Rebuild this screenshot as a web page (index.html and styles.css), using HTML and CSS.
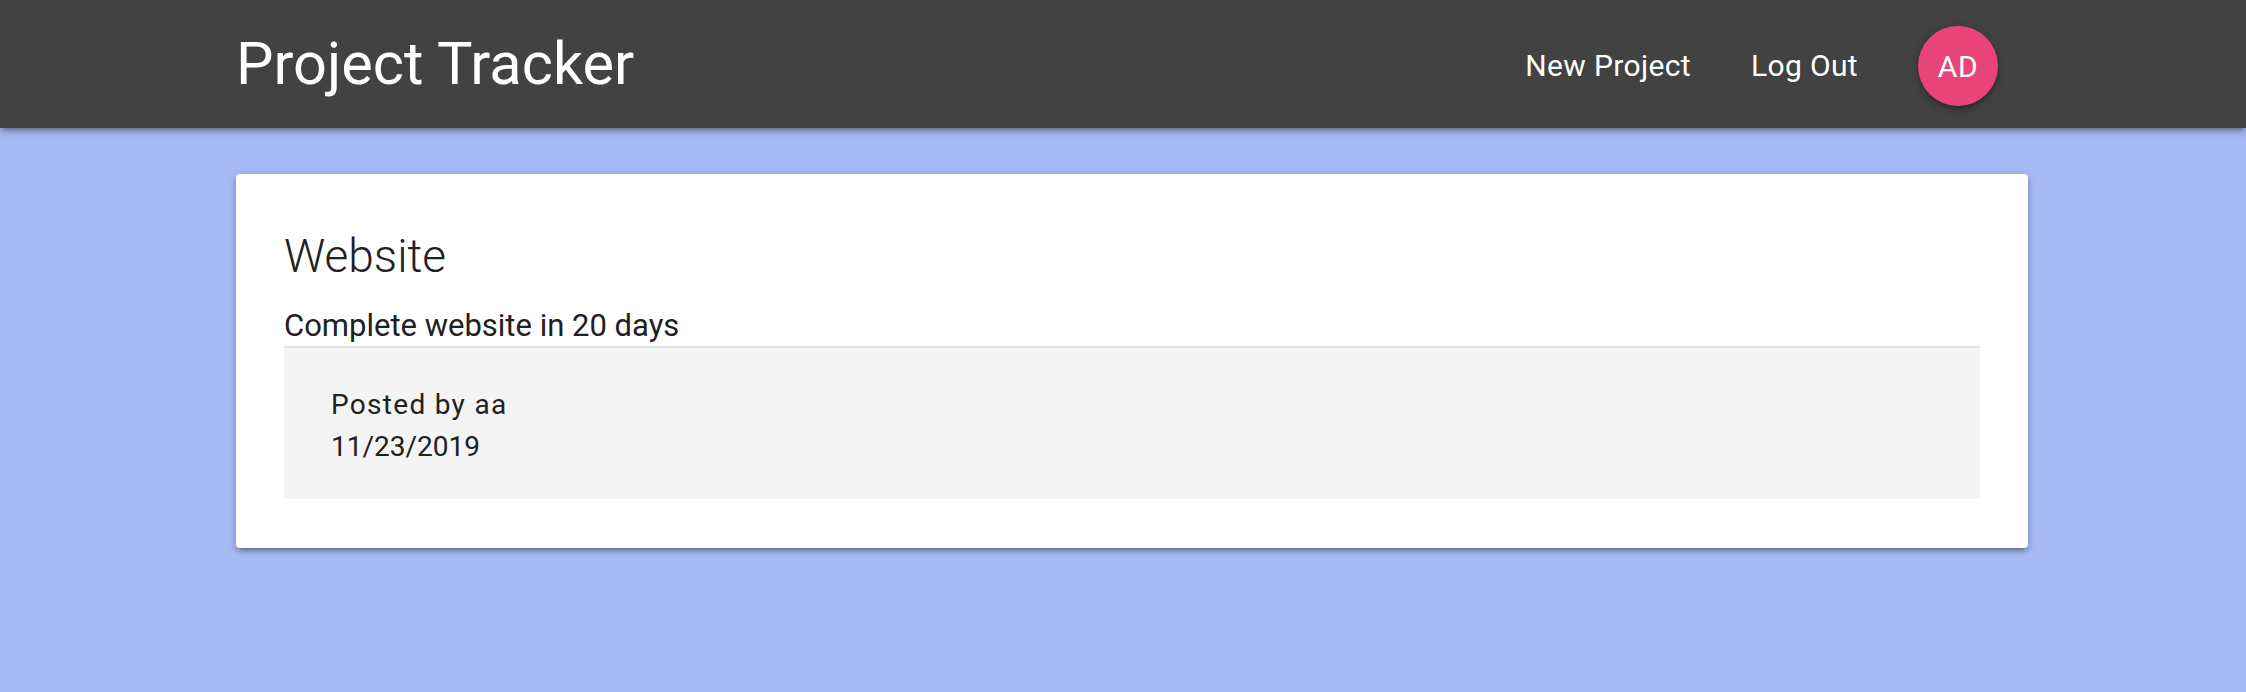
FILE: index.html
```html
<!DOCTYPE html>
<html lang="en">
<head>
<meta charset="utf-8">
<title>Project Tracker</title>
<link rel="stylesheet" href="styles.css">
</head>
<body>
<nav class="navbar">
  <div class="nav-inner">
    <a class="brand" href="#">Project Tracker</a>
    <ul class="nav-links">
      <li><a class="nav-link" href="#">New Project</a></li>
      <li><a class="nav-link" href="#">Log Out</a></li>
      <li><a class="nav-link avatar-link" href="#"><span class="avatar">AD</span></a></li>
    </ul>
  </div>
</nav>
<main class="page">
  <div class="card">
    <span class="card-title">Website</span>
    <p class="card-text">Complete website in 20 days</p>
    <div class="card-action">
      <div class="meta meta-author">Posted by aa</div>
      <div class="meta">11/23/2019</div>
    </div>
  </div>
</main>
</body>
</html>
```
FILE: styles.css
```css
html, body {
  margin: 0;
  padding: 0;
}
body {
  background: #a6baf5;
  font-family: Roboto, "Liberation Sans", sans-serif;
  min-height: 692px;
}
.navbar {
  height: 128px;
  background: #424242;
  box-shadow: 0 4px 4px 0 rgba(0,0,0,.14), 0 6px 2px -4px rgba(0,0,0,.12), 0 2px 10px 0 rgba(0,0,0,.2);
  position: relative;
  z-index: 1;
}
.nav-inner {
  margin-left: 236px;
  width: 1792px;
  height: 128px;
  display: flex;
  align-items: center;
  justify-content: space-between;
}
.brand {
  color: #fff;
  text-decoration: none;
  font-size: 59.5px;
  line-height: 128px;
  font-weight: 400;
}
.nav-links {
  list-style: none;
  margin: 0;
  padding: 0;
  display: flex;
  align-items: center;
  height: 128px;
}
.nav-link {
  display: flex;
  align-items: center;
  height: 128px;
  padding: 3px 30px 0;
  box-sizing: border-box;
  color: #fff;
  text-decoration: none;
  font-size: 30px;
  letter-spacing: 0.35px;
}
.avatar-link {
  padding-top: 4px;
}
.avatar {
  width: 80px;
  height: 80px;
  border-radius: 50%;
  background: #ea457a;
  color: #fff;
  display: flex;
  align-items: center;
  justify-content: center;
  font-size: 30px;
  letter-spacing: 0.5px;
  box-shadow: 0 4px 4px 0 rgba(0,0,0,.14), 0 6px 2px -4px rgba(0,0,0,.12), 0 2px 10px 0 rgba(0,0,0,.2);
}
.page {
  padding-top: 46px;
}
.card {
  margin-left: 236px;
  width: 1792px;
  box-sizing: border-box;
  background: #fff;
  border-radius: 4px;
  padding: 50px 48px 49px;
  color: #212121;
  box-shadow: 0 4px 4px 0 rgba(0,0,0,.14), 0 6px 2px -4px rgba(0,0,0,.12), 0 2px 10px 0 rgba(0,0,0,.2);
}
.card-title {
  display: block;
  font-size: 46px;
  font-weight: 300;
  line-height: 64px;
}
.card-text {
  margin: 18px 0 0;
  font-size: 31px;
  line-height: 40px;
}
.card-action {
  border-top: 2px solid #e3e3e3;
  background: #f4f4f4;
  border-radius: 0 0 4px 4px;
  padding: 36px 47px 31px;
}
.meta {
  font-size: 28px;
  line-height: 42px;
}
.meta-author {
  letter-spacing: 1.3px;
}
```
